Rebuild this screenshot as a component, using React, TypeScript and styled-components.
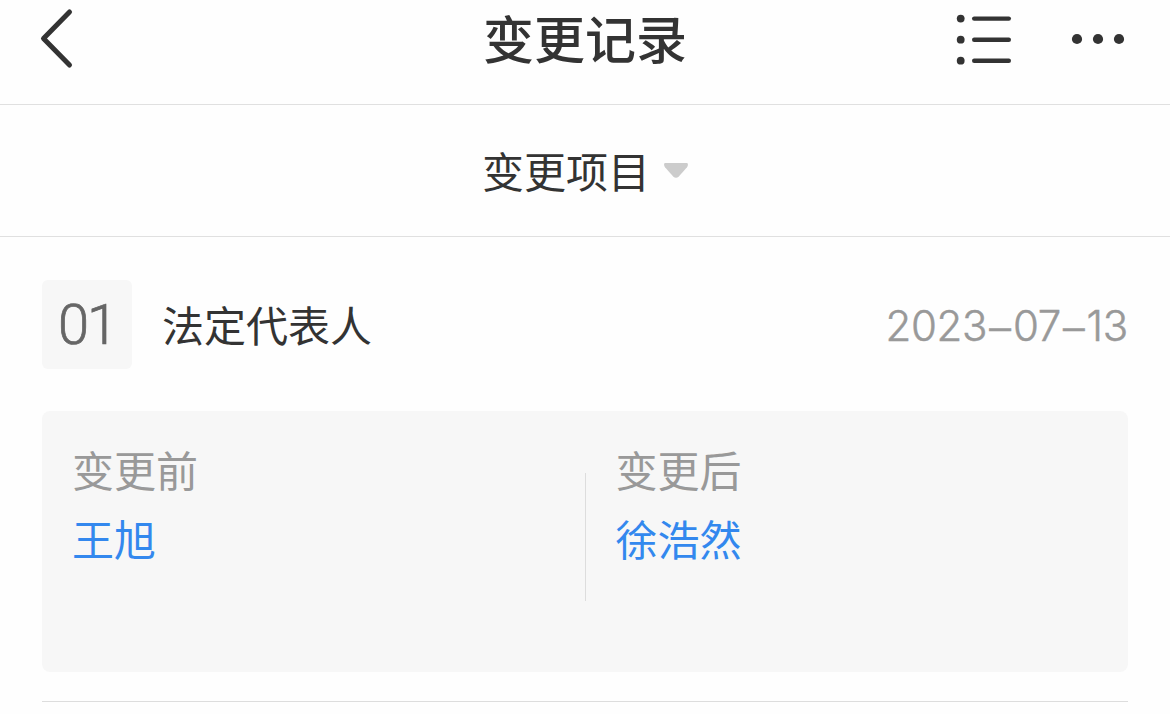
import React from 'react';
import styled, { createGlobalStyle } from 'styled-components';

const GlobalStyle = createGlobalStyle`
  * {
    box-sizing: border-box;
  }

  body {
    margin: 0;
    background: #fefefe;
    color: #333333;
    font-family: 'Noto Sans CJK SC', 'Noto Sans', sans-serif;
    overflow: hidden;
  }
`;

const Page = styled.div`
  height: 714px;
  overflow: hidden;
`;

const Header = styled.header`
  height: 105px;
  display: grid;
  grid-template-columns: 1fr auto 1fr;
  align-items: start;
  padding: 0 42px 0 36px;
  border-bottom: 1px solid #e0e0e0;
`;

const Title = styled.h1`
  margin: 0 0 0 6px;
  font-size: 51px;
  font-weight: 500;
  line-height: 74px;
`;

const IconButton = styled.button`
  display: flex;
  padding: 0;
  border: none;
  background: none;
  color: #333333;
  cursor: pointer;
`;

const Actions = styled.div`
  display: flex;
  justify-content: flex-end;
  gap: 56px;
`;

const FilterBar = styled.div`
  height: 132px;
  display: flex;
  justify-content: center;
  align-items: center;
  gap: 13px;
  padding-left: 1px;
  border-bottom: 1px solid #e0e0e0;
  font-size: 42px;
  line-height: 60px;
`;

const FilterLabel = styled.span`
  padding-bottom: 2px;
`;

const Record = styled.section`
  margin: 0 42px;
  padding: 43px 0 29px;
  border-bottom: 1px solid #dddddd;
`;

const RecordHead = styled.div`
  display: flex;
  align-items: center;
  height: 89px;
  margin-bottom: 42px;
`;

const Badge = styled.span`
  width: 90px;
  height: 89px;
  display: flex;
  justify-content: center;
  align-items: center;
  border-radius: 6px;
  background: #f7f7f7;
  color: #666666;
  font-family: 'Roboto', sans-serif;
  font-size: 56px;
  font-weight: 300;
  letter-spacing: -2px;
  -webkit-text-stroke: 0.7px currentColor;
`;

const RecordName = styled.span`
  margin-left: 30px;
  padding-bottom: 2px;
  font-size: 42px;
  line-height: 60px;
`;

const RecordDate = styled.time`
  margin: 2px 0 0 auto;
  color: #999999;
  font-family: 'Inter', sans-serif;
  font-size: 42px;
  font-weight: 300;
  letter-spacing: -0.3px;
  -webkit-text-stroke: 0.5px currentColor;
`;

const Dash = styled.span`
  margin: 0 2px;
  font-family: 'Liberation Sans', sans-serif;
  font-size: 39px;
  letter-spacing: 0;
  line-height: 1;
  vertical-align: 1px;
`;

const ChangePanel = styled.div`
  height: 261px;
  display: flex;
  border-radius: 8px;
  background: #f7f7f7;
`;

const Divider = styled.i`
  width: 1px;
  height: 128px;
  margin-top: 62px;
  background: #dddddd;
`;

const ChangeColumn = styled.div`
  flex: 1;
  padding: 28px 30px 0;
  font-size: 42px;
`;

const ChangeLabel = styled.div`
  color: #999999;
  line-height: 60px;
`;

const ChangeValue = styled.div`
  margin-top: 9px;
  color: #3388ee;
  line-height: 60px;
`;

const BackIcon = () => (
  <svg width="40" height="78" viewBox="0 0 40 78" fill="none">
    <path
      d="M33.5 12 L7.5 38.5 L33.5 65"
      stroke="currentColor"
      strokeWidth="5"
      strokeLinecap="round"
      strokeLinejoin="round"
    />
  </svg>
);

const ListIcon = () => (
  <svg width="58" height="78" viewBox="0 0 58 78" fill="currentColor">
    {[18.6, 39.7, 60.7].map((y) => (
      <React.Fragment key={y}>
        <circle cx="5.7" cy={y} r="3.9" />
        <rect x="17" y={y - 2.2} width="39" height="4.4" rx="2.2" />
      </React.Fragment>
    ))}
  </svg>
);

const MoreIcon = () => (
  <svg width="59" height="78" viewBox="0 0 59 78" fill="currentColor">
    <circle cx="8" cy="39" r="5.1" />
    <circle cx="29" cy="39" r="5.1" />
    <circle cx="50" cy="39" r="5.1" />
  </svg>
);

const CaretIcon = () => (
  <svg width="26" height="16" viewBox="0 0 26 16">
    <path
      d="M1.6 0 H24.4 Q25.6 2.2 24 4.2 L15.8 13.4 Q13 16.2 10.2 13.4 L2 4.2 Q0.4 2.2 1.6 0 Z"
      fill="#cccccc"
    />
  </svg>
);

interface ChangeProps {
  label: string;
  value: string;
}

const Change: React.FC<ChangeProps> = ({ label, value }) => (
  <ChangeColumn>
    <ChangeLabel>{label}</ChangeLabel>
    <ChangeValue>{value}</ChangeValue>
  </ChangeColumn>
);

const App: React.FC = () => {
  return (
    <Page>
      <GlobalStyle />
      <Header>
        <IconButton aria-label="返回">
          <BackIcon />
        </IconButton>
        <Title>变更记录</Title>
        <Actions>
          <IconButton aria-label="列表">
            <ListIcon />
          </IconButton>
          <IconButton aria-label="更多">
            <MoreIcon />
          </IconButton>
        </Actions>
      </Header>
      <FilterBar>
        <FilterLabel>变更项目</FilterLabel>
        <CaretIcon />
      </FilterBar>
      <Record>
        <RecordHead>
          <Badge>01</Badge>
          <RecordName>法定代表人</RecordName>
          <RecordDate dateTime="2023-07-13">
            2023<Dash>–</Dash>07<Dash>–</Dash>13
          </RecordDate>
        </RecordHead>
        <ChangePanel>
          <Change label="变更前" value="王旭" />
          <Divider />
          <Change label="变更后" value="徐浩然" />
        </ChangePanel>
      </Record>
    </Page>
  );
};

export default App;
